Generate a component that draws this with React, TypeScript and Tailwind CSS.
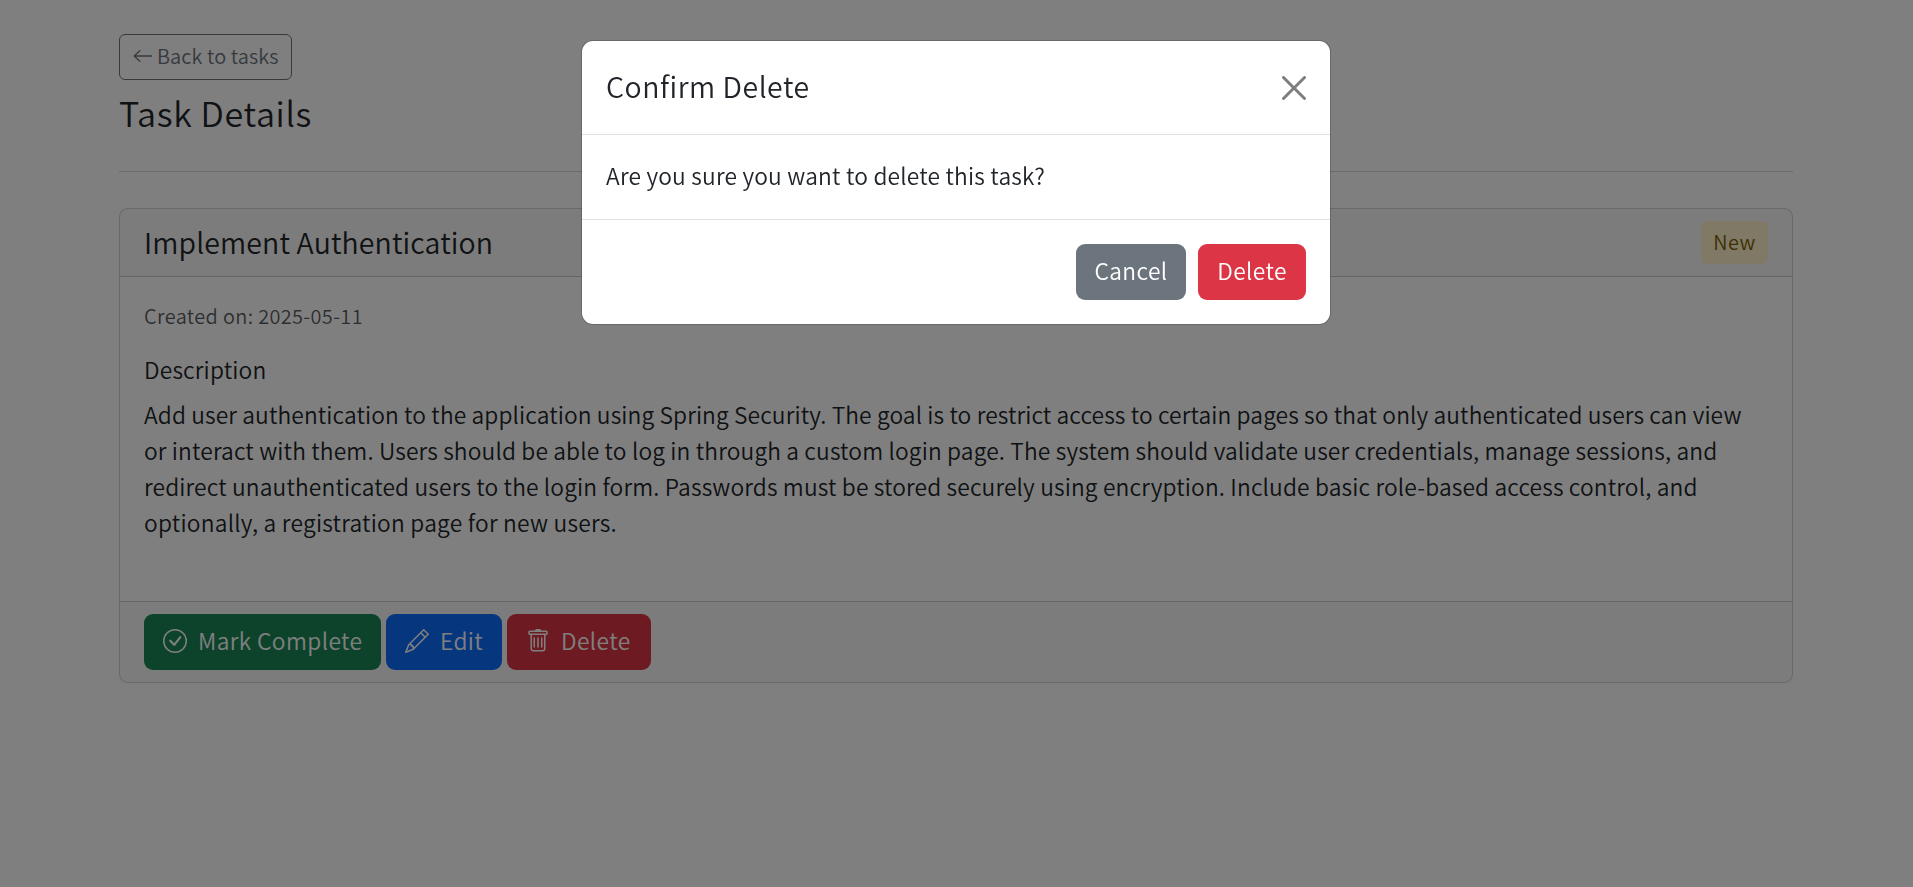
import type { ReactNode } from "react";
import { BsCheckCircle, BsPencil, BsTrash } from "react-icons/bs";

function ActionButton({ className, children }: { className: string; children: ReactNode }) {
  return (
    <button
      type="button"
      className={`flex h-14 items-center rounded-[9px] pb-0.5 text-[22.75px] leading-9 tracking-[0.4px] text-white ${className}`}
    >
      {children}
    </button>
  );
}

function DeleteDialog() {
  return (
    <div className="fixed inset-0 flex items-start justify-center bg-black/50 pt-10">
      <div
        role="dialog"
        className="mr-px flex w-[750px] flex-col rounded-xl border border-black/[0.175] bg-white bg-clip-padding"
      >
        <div className="flex h-[94px] items-center justify-between border-b border-[#dee2e6] px-6">
          <h5 className="pb-[3px] text-[28.45px] leading-9 tracking-[0.53px]">Confirm Delete</h5>
          <button type="button" aria-label="Close" className="opacity-50">
            <svg viewBox="0 0 16 16" className="size-6" fill="#000">
              <path d="M.293.293a1 1 0 0 1 1.414 0L8 6.586 14.293.293a1 1 0 1 1 1.414 1.414L9.414 8l6.293 6.293a1 1 0 0 1-1.414 1.414L8 9.414l-6.293 6.293a1 1 0 0 1-1.414-1.414L6.586 8 .293 1.707a1 1 0 0 1 0-1.414" />
            </svg>
          </button>
        </div>
        <div className="h-[84px] px-6 pt-[23px] text-[22.75px] leading-9 tracking-[0.2px]">
          Are you sure you want to delete this task?
        </div>
        <div className="flex h-[105px] items-center justify-end gap-3 border-t border-[#dee2e6] px-6">
          <ActionButton className="w-[110px] justify-center bg-[#6c757d]">Cancel</ActionButton>
          <ActionButton className="w-[108px] justify-center bg-[#dc3545]">Delete</ActionButton>
        </div>
      </div>
    </div>
  );
}

export default function App() {
  return (
    <div className="min-h-screen bg-white pt-[34px] font-['Noto_Sans_CJK_SC',sans-serif] font-[350] text-[#212529]">
      <main className="ml-[119px] w-[1674px]">
        <button
          type="button"
          className="flex h-[46px] w-[173px] items-center rounded-md border border-[#6c757d] pb-0.5 pl-[13px] text-[19.9px] leading-8 tracking-[0.12px] text-[#6c757d]"
        >
          <svg viewBox="0 0 20 14" className="mr-1 h-3.5 w-5" fill="none" stroke="currentColor" strokeWidth="1.3">
            <path d="M19 7H1M7.3 1.3 1.2 7l6.1 5.7" />
          </svg>
          <span className="whitespace-nowrap">Back to tasks</span>
        </button>
        <h2 className="mt-2.5 h-[81px] text-[34.1px] leading-[44px] tracking-[0.65px]">Task Details</h2>
        <hr className="border-t border-[#212529]/[0.18]" />

        <section className="mt-9 flex h-[475px] flex-col rounded-[9px] border border-black/[0.175]">
          <header className="flex h-[68px] items-center justify-between border-b border-black/[0.175] bg-[#212529]/[0.03] px-6">
            <h4 className="pb-0.5 text-[28.45px] leading-9 tracking-[0.14px]">Implement Authentication</h4>
            <span className="flex h-[43px] w-[67px] items-center justify-center rounded-md bg-[#fff3cd] pb-0.5 text-[19.9px] leading-8 tracking-[0.5px] text-[#806003]">
              New
            </span>
          </header>
          <div className="flex-1 px-6 pt-[23px]">
            <p className="text-[19.9px] leading-8 tracking-[0.37px] text-[#212529]/75">Created on: 2025-05-11</p>
            <h5 className="mt-6 text-[22.75px] leading-7 tracking-[0.18px]">Description</h5>
            <p className="mt-[13px] text-[22.75px] leading-9 whitespace-nowrap">
              <span className="tracking-[0.124px]">
                Add user authentication to the application using Spring Security. The goal is to restrict access to
                certain pages so that only authenticated users can view
              </span>
              <br />
              <span className="tracking-[0.153px]">
                or interact with them. Users should be able to log in through a custom login page. The system should
                validate user credentials, manage sessions, and
              </span>
              <br />
              <span className="tracking-[0.155px]">
                redirect unauthenticated users to the login form. Passwords must be stored securely using encryption.
                Include basic role-based access control, and
              </span>
              <br />
              <span className="tracking-[0.24px]">optionally, a registration page for new users.</span>
            </p>
          </div>
          <footer className="flex h-[81px] items-center gap-[5px] border-t border-black/[0.175] bg-[#212529]/[0.03] px-6">
            <ActionButton className="w-[237px] bg-[#198754] pl-[19px]">
              <BsCheckCircle className="mr-[11px] size-6" />
              Mark Complete
            </ActionButton>
            <ActionButton className="w-[116px] bg-[#0d6efd] pl-[19px]">
              <BsPencil className="mr-[11px] size-6" />
              Edit
            </ActionButton>
            <ActionButton className="w-36 bg-[#dc3545] pl-[19px]">
              <BsTrash className="mr-[11px] size-6" />
              Delete
            </ActionButton>
          </footer>
        </section>
      </main>
      <DeleteDialog />
    </div>
  );
}
